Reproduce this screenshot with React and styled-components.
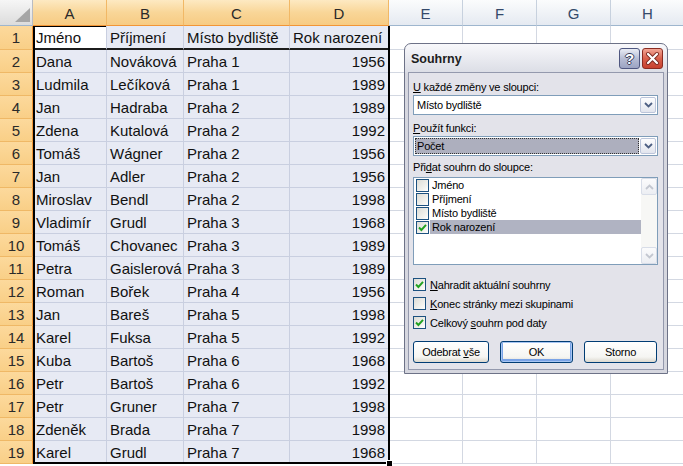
import React from "react";
import styled, { createGlobalStyle } from "styled-components";

const GlobalStyle = createGlobalStyle`
  html, body {
    margin: 0;
    padding: 0;
    background: #fff;
    overflow: hidden;
  }
  body {
    font-family: "Liberation Sans", Arial, sans-serif;
  }
`;

const Screen = styled.div`
  position: relative;
  width: 683px;
  height: 466px;
  overflow: hidden;
  background: #fff;
`;

const Sheet = styled.div`
  display: grid;
  grid-template-columns: 33px 74px 77px 106px 99px 74px 74px 74px 74px;
  grid-template-rows: 26px 24px repeat(18, 23px);
  font-size: 15px;
  color: #111;
`;

const Corner = styled.div`
  box-sizing: border-box;
  border-right: 1px solid #b9bcc2;
  border-bottom: 1px solid #9eb6ce;
  background: linear-gradient(#f6f6f6, #dcdcdc);
  display: flex;
  align-items: flex-end;
  justify-content: flex-end;
  padding: 0 2px 3px 0;
`;

const ColHead = styled.div`
  box-sizing: border-box;
  display: flex;
  align-items: center;
  justify-content: center;
  padding-top: 2px;
  border-right: 1px solid ${(p) => (p.$sel ? "#f1b866" : "#c7d1de")};
  border-bottom: 1px solid ${(p) => (p.$sel ? "#f29536" : "#9eb6ce")};
  background: ${(p) =>
    p.$sel
      ? "linear-gradient(#fde9c2, #f9d698 50%, #f7cb83)"
      : "linear-gradient(#fbfcfd, #e5eaf1)"};
  color: ${(p) => (p.$sel ? "#2a2a2a" : "#34496a")};
`;

const RowHead = styled.div`
  box-sizing: border-box;
  display: flex;
  align-items: center;
  justify-content: center;
  border-right: 1px solid #f29536;
  border-bottom: 1px solid #efb866;
  background: linear-gradient(#fcd99c, #f9cf87);
  color: #2a2a2a;
`;

const Cell = styled.div`
  box-sizing: border-box;
  display: flex;
  align-items: center;
  justify-content: ${(p) => (p.$num ? "flex-end" : "flex-start")};
  padding: 0 3px 0 3px;
  white-space: nowrap;
  overflow: hidden;
  border-right: 1px solid ${(p) => (p.$sel ? "#c9cfe0" : "#d3d8e2")};
  border-bottom: ${(p) =>
    p.$head ? "2px solid #1c1c1c" : `1px solid ${p.$sel ? "#c9cfe0" : "#d3d8e2"}`};
  background: ${(p) => (p.$active ? "#fff" : p.$sel ? "#e7eaf4" : "#fff")};
  box-shadow: ${(p) => (p.$active ? "inset 0 1px 0 #000" : "none")};
`;

const SelectionFrame = styled.div`
  position: absolute;
  left: 33px;
  top: 26px;
  width: 357px;
  height: 438px;
  box-sizing: border-box;
  border: 2px solid #000;
  border-top: none;
  pointer-events: none;
`;

const FillHandle = styled.div`
  position: absolute;
  left: 386px;
  top: 460px;
  width: 5px;
  height: 5px;
  background: #000;
  border: 1px solid #fff;
`;

/* dialog */

const Dialog = styled.div`
  position: absolute;
  left: 404px;
  top: 43px;
  width: 264px;
  height: 331px;
  box-sizing: border-box;
  border: 1px solid #6d7287;
  border-radius: 7px 7px 0 0;
  background: linear-gradient(#f8f8fb, #dcdee6 28px, #d6d7df 29px, #d6d7df);
  display: flex;
  flex-direction: column;
  padding: 0 3px 3px;
  font-family: "Liberation Sans", Arial, sans-serif;
  font-size: 11px;
  letter-spacing: -0.2px;
  color: #000;
`;

const TitleBar = styled.div`
  height: 28px;
  display: flex;
  align-items: center;
  padding: 1px 1px 0 3px;
  box-sizing: border-box;
`;

const Title = styled.div`
  flex: 1;
  font-weight: bold;
  font-size: 12.5px;
  letter-spacing: 0;
  color: #1d1d1d;
`;

const CapButton = styled.div`
  width: 21px;
  height: 21px;
  box-sizing: border-box;
  margin-left: 2px;
  border-radius: 3px;
  border: 1px solid ${(p) => (p.$close ? "#8a2c22" : "#4f5780")};
  background: ${(p) =>
    p.$close
      ? "linear-gradient(#f2a696, #d9604c 50%, #c7412f)"
      : "linear-gradient(#e9ecf4, #b7bdd4 50%, #9ca4c3)"};
  display: flex;
  align-items: center;
  justify-content: center;
  color: #fff;
  font-weight: bold;
  font-size: 15px;
  letter-spacing: 0;
  text-shadow: 1px 0 #3a3f5c, -1px 0 #3a3f5c, 0 1px #3a3f5c, 0 -1px #3a3f5c;
`;

const Body = styled.div`
  flex: 1;
  border: 1px solid #9499ad;
  background: #e3e3ea;
  padding: 0 5px 0 4px;
  display: flex;
  flex-direction: column;
`;

const Label = styled.div`
  line-height: 15px;
  height: 15px;
  margin-top: ${(p) => p.$mt || 0}px;
  white-space: nowrap;
`;

const Select = styled.div`
  height: 20px;
  box-sizing: border-box;
  border: 1px solid #7f9db9;
  background: #fff;
  display: flex;
  padding: 1px;
`;

const SelectValue = styled.div`
  flex: 1;
  display: flex;
  align-items: center;
  padding-left: 2px;
  margin-right: 1px;
  box-sizing: border-box;
  ${(p) =>
    p.$focused &&
    `
    background: #adafbe;
    border: 1px dotted #333;
    padding-left: 1px;
  `}
`;

const DropButton = styled.div`
  width: 16px;
  box-sizing: border-box;
  border: 1px solid #bcc5da;
  border-radius: 2px;
  background: linear-gradient(#fdfdfe, #e2e5ee);
  display: flex;
  align-items: center;
  justify-content: center;
`;

const ListBox = styled.div`
  margin-top: 2px;
  height: 88px;
  box-sizing: border-box;
  border: 1px solid #7f9db9;
  background: #fff;
  display: flex;
`;

const ListItems = styled.div`
  flex: 1;
  display: flex;
  flex-direction: column;
`;

const ListItem = styled.div`
  height: 14px;
  display: flex;
  align-items: center;
  padding-left: 2px;
`;

const ItemText = styled.div`
  flex: 1;
  height: 14px;
  line-height: 14px;
  margin-left: 1px;
  padding-left: 2px;
  background: ${(p) => (p.$selected ? "#b0b3c2" : "transparent")};
`;

const ScrollBar = styled.div`
  width: 16px;
  display: flex;
  flex-direction: column;
  justify-content: space-between;
  background: #f7f7f5;
`;

const ScrollButton = styled.div`
  height: 17px;
  box-sizing: border-box;
  border: 1px solid #d8dde8;
  border-radius: 2px;
  background: linear-gradient(#fbfbfc, #eceef3);
  display: flex;
  align-items: center;
  justify-content: center;
`;

const Box = styled.div`
  width: 13px;
  height: 13px;
  flex: none;
  box-sizing: border-box;
  border: 1px solid #1c5180;
  background: linear-gradient(135deg, #dcdcd6, #f3f3ef 70%, #fff);
  display: flex;
  align-items: center;
  justify-content: center;
`;

const CheckRow = styled.div`
  height: 19px;
  display: flex;
  align-items: center;
  gap: 4px;
  margin-top: ${(p) => p.$mt || 0}px;
  white-space: nowrap;
`;

const ButtonRow = styled.div`
  display: flex;
  gap: 11px;
  margin-top: 9px;
`;

const Button = styled.div`
  width: ${(p) => p.$w}px;
  height: 22px;
  box-sizing: border-box;
  border: 1px solid #003c74;
  border-radius: 3px;
  background: linear-gradient(#ffffff, #f5f5f2 75%, #dcd8ce);
  display: flex;
  align-items: center;
  justify-content: center;
  box-shadow: ${(p) =>
    p.$default ? "inset 0 0 0 1px #a8c6f3, inset 0 -1px 0 2px #7aa3e6" : "none"};
`;

const rows = [
  ["Dana", "Nováková", "Praha 1", "1956"],
  ["Ludmila", "Lečíková", "Praha 1", "1989"],
  ["Jan", "Hadraba", "Praha 2", "1989"],
  ["Zdena", "Kutalová", "Praha 2", "1992"],
  ["Tomáš", "Wágner", "Praha 2", "1956"],
  ["Jan", "Adler", "Praha 2", "1956"],
  ["Miroslav", "Bendl", "Praha 2", "1998"],
  ["Vladimír", "Grudl", "Praha 3", "1968"],
  ["Tomáš", "Chovanec", "Praha 3", "1989"],
  ["Petra", "Gaislerová", "Praha 3", "1989"],
  ["Roman", "Bořek", "Praha 4", "1956"],
  ["Jan", "Bareš", "Praha 5", "1998"],
  ["Karel", "Fuksa", "Praha 5", "1992"],
  ["Kuba", "Bartoš", "Praha 6", "1968"],
  ["Petr", "Bartoš", "Praha 6", "1992"],
  ["Petr", "Gruner", "Praha 7", "1998"],
  ["Zdeněk", "Brada", "Praha 7", "1998"],
  ["Karel", "Grudl", "Praha 7", "1968"],
];

const letters = ["A", "B", "C", "D", "E", "F", "G", "H"];
const header = ["Jméno", "Příjmení", "Místo bydliště", "Rok narození"];

function Check({ checked }) {
  return (
    <Box>
      {checked && (
        <svg width="9" height="9" viewBox="0 0 9 9">
          <path d="M1 4.5 L3.4 7 L8 1.8" fill="none" stroke="#21a121" strokeWidth="1.9" />
        </svg>
      )}
    </Box>
  );
}

function Chevron({ color = "#4d5f82", up }) {
  return (
    <svg width="9" height="6" viewBox="0 0 9 6">
      <path
        d={up ? "M1 5 L4.5 1.5 L8 5" : "M1 1 L4.5 4.5 L8 1"}
        fill="none"
        stroke={color}
        strokeWidth="1.8"
      />
    </svg>
  );
}

function SheetGrid() {
  return (
    <Sheet>
      <Corner>
        <svg width="15" height="14" viewBox="0 0 15 14">
          <polygon points="15,0 15,14 0,14" fill="#a6a6a6" />
        </svg>
      </Corner>
      {letters.map((l, i) => (
        <ColHead key={l} $sel={i < 4}>
          {l}
        </ColHead>
      ))}
      {[header, ...rows].map((r, ri) => (
        <React.Fragment key={ri}>
          <RowHead>{ri + 1}</RowHead>
          {r.map((v, ci) => (
            <Cell
              key={ci}
              $sel
              $active={ri === 0 && ci === 0}
              $head={ri === 0}
              $num={ri > 0 && ci === 3}
            >
              {v}
            </Cell>
          ))}
          {[0, 1, 2, 3].map((k) => (
            <Cell key={"e" + k} />
          ))}
        </React.Fragment>
      ))}
    </Sheet>
  );
}

function SubtotalDialog() {
  return (
    <Dialog>
      <TitleBar>
        <Title>Souhrny</Title>
        <CapButton>?</CapButton>
        <CapButton $close>
          <svg width="15" height="15" viewBox="0 0 15 15">
            <path d="M3 3 L12 12 M12 3 L3 12" stroke="#7a2a22" strokeWidth="4" strokeLinecap="round" />
            <path d="M3 3 L12 12 M12 3 L3 12" stroke="#fff" strokeWidth="2.2" strokeLinecap="round" />
          </svg>
        </CapButton>
      </TitleBar>
      <Body>
        <Label $mt={7}>
          <u>U</u> každé změny ve sloupci:
        </Label>
        <Select>
          <SelectValue>Místo bydliště</SelectValue>
          <DropButton>
            <Chevron />
          </DropButton>
        </Select>
        <Label $mt={6}>
          <u>P</u>oužít funkci:
        </Label>
        <Select>
          <SelectValue $focused>Počet</SelectValue>
          <DropButton>
            <Chevron />
          </DropButton>
        </Select>
        <Label $mt={4}>
          Při<u>d</u>at souhrn do sloupce:
        </Label>
        <ListBox>
          <ListItems>
            {header.map((h, i) => (
              <ListItem key={h}>
                <Check checked={i === 3} />
                <ItemText $selected={i === 3}>{h}</ItemText>
              </ListItem>
            ))}
          </ListItems>
          <ScrollBar>
            <ScrollButton>
              <Chevron up color="#c3c7d0" />
            </ScrollButton>
            <ScrollButton>
              <Chevron color="#c3c7d0" />
            </ScrollButton>
          </ScrollBar>
        </ListBox>
        <CheckRow $mt={10}>
          <Check checked />
          <span>
            <u>N</u>ahradit aktuální souhrny
          </span>
        </CheckRow>
        <CheckRow>
          <Check />
          <span>
            <u>K</u>onec stránky mezi skupinami
          </span>
        </CheckRow>
        <CheckRow>
          <Check checked />
          <span>
            Celkový <u>s</u>ouhrn pod daty
          </span>
        </CheckRow>
        <ButtonRow>
          <Button $w={76}>
            Odebrat&nbsp;<u>v</u>še
          </Button>
          <Button $w={73} $default>
            OK
          </Button>
          <Button $w={73}>Storno</Button>
        </ButtonRow>
      </Body>
    </Dialog>
  );
}

export default function App() {
  return (
    <Screen>
      <GlobalStyle />
      <SheetGrid />
      <SelectionFrame />
      <FillHandle />
      <SubtotalDialog />
    </Screen>
  );
}
